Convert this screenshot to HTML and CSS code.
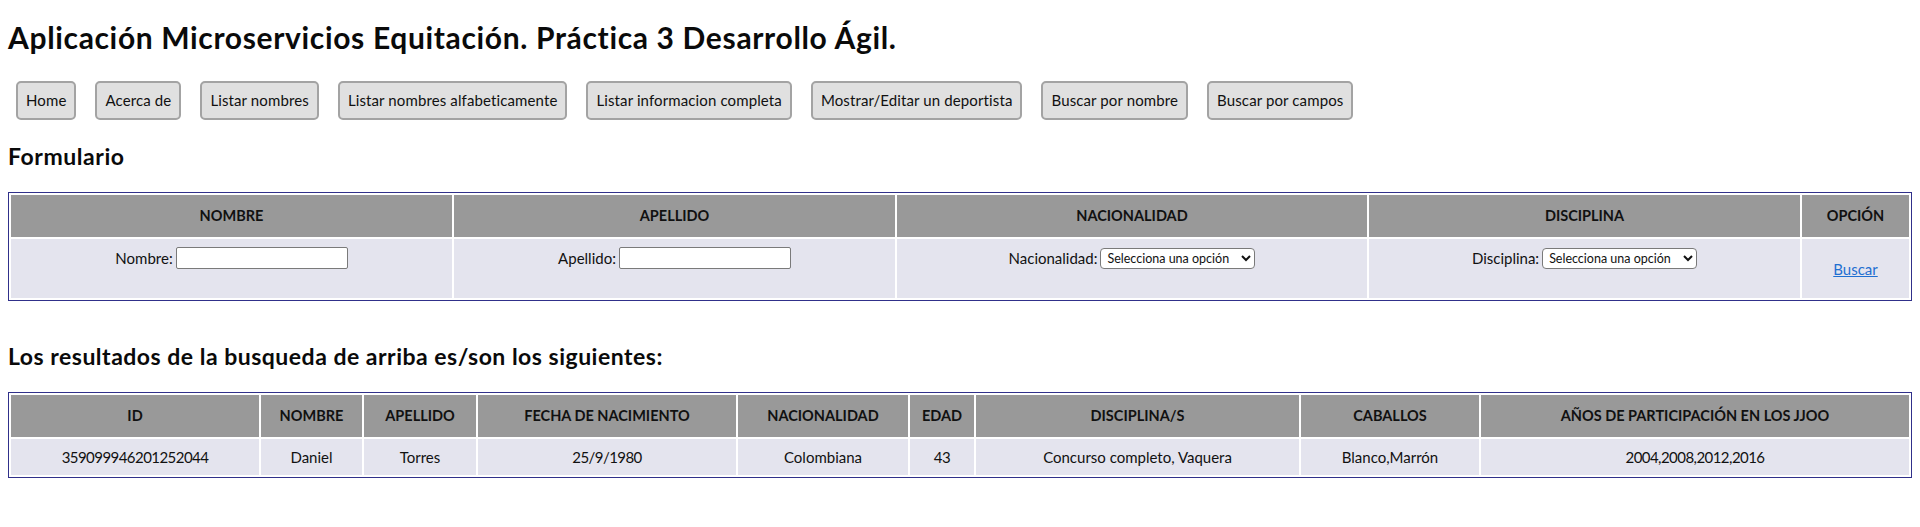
FILE: index.html
```html
<!DOCTYPE html>
<html lang="es">
<head>
<meta charset="utf-8">
<title>Aplicación Microservicios Equitación</title>
<link rel="stylesheet" href="styles.css">
</head>
<body>
<h1 class="title">Aplicación Microservicios Equitación. Práctica 3 Desarrollo Ágil.</h1>
<nav class="menu">
  <button class="btn" type="button">Home</button>
  <button class="btn" type="button">Acerca de</button>
  <button class="btn" type="button">Listar nombres</button>
  <button class="btn" type="button">Listar nombres alfabeticamente</button>
  <button class="btn" type="button">Listar informacion completa</button>
  <button class="btn" type="button">Mostrar/Editar un deportista</button>
  <button class="btn" type="button">Buscar por nombre</button>
  <button class="btn" type="button">Buscar por campos</button>
</nav>
<h2 class="section">Formulario</h2>
<table class="grid form-grid">
  <thead>
    <tr>
      <th class="fc-nombre">NOMBRE</th>
      <th class="fc-apellido">APELLIDO</th>
      <th class="fc-nac">NACIONALIDAD</th>
      <th class="fc-disc">DISCIPLINA</th>
      <th class="fc-opt">OPCIÓN</th>
    </tr>
  </thead>
  <tbody>
    <tr>
      <td><div class="field"><label for="nombre">Nombre:</label><input class="text-input" id="nombre" type="text"></div></td>
      <td><div class="field"><label for="apellido">Apellido:</label><input class="text-input" id="apellido" type="text"></div></td>
      <td><div class="field"><label for="nac">Nacionalidad:</label><select class="picker" id="nac"><option>Selecciona una opción</option></select></div></td>
      <td><div class="field"><label for="disc">Disciplina:</label><select class="picker" id="disc"><option>Selecciona una opción</option></select></div></td>
      <td><a class="link" href="#">Buscar</a></td>
    </tr>
  </tbody>
</table>
<h2 class="section results-title">Los resultados de la busqueda de arriba es/son los siguientes:</h2>
<table class="grid results">
  <thead>
    <tr>
      <th class="rc-id">ID</th>
      <th class="rc-nombre">NOMBRE</th>
      <th class="rc-apellido">APELLIDO</th>
      <th class="rc-fecha">FECHA DE NACIMIENTO</th>
      <th class="rc-nac">NACIONALIDAD</th>
      <th class="rc-edad">EDAD</th>
      <th class="rc-disc">DISCIPLINA/S</th>
      <th class="rc-cab">CABALLOS</th>
      <th class="rc-anos">AÑOS DE PARTICIPACIÓN EN LOS JJOO</th>
    </tr>
  </thead>
  <tbody>
    <tr>
      <td class="num">359099946201252044</td>
      <td>Daniel</td>
      <td>Torres</td>
      <td class="num">25/9/1980</td>
      <td>Colombiana</td>
      <td class="num">43</td>
      <td>Concurso completo, Vaquera</td>
      <td>Blanco,Marrón</td>
      <td class="num">2004,2008,2012,2016</td>
    </tr>
  </tbody>
</table>
</body>
</html>
```

FILE: styles.css
```css
html, body {
  background: #ffffff;
}
body {
  margin: 0;
  padding: 0 8px;
  font-family: Lato, "Liberation Sans", sans-serif;
  color: #111111;
}
.title {
  margin: 20px 0 0 0;
  font-size: 30px;
  line-height: 34px;
  letter-spacing: 0.65px;
  font-weight: 700;
  color: #0a0a0a;
}
.menu {
  display: flex;
  gap: 19px;
  margin-top: 27px;
  padding-left: 8px;
}
.btn {
  font-family: Lato, "Liberation Sans", sans-serif;
  font-size: 15px;
  line-height: 21px;
  letter-spacing: 0.12px;
  color: #111111;
  background: #e0e0e0;
  border: 2px solid #a3a3a3;
  border-radius: 5px;
  padding: 7px 8px;
  margin: 0;
  cursor: pointer;
}
.section {
  margin: 22px 0 0 0;
  font-size: 23px;
  line-height: 28px;
  letter-spacing: 0.55px;
  font-weight: 700;
  color: #0a0a0a;
}
.results-title {
  margin-top: 41px;
  letter-spacing: 0.5px;
}
.grid {
  width: 100%;
  margin-top: 22px;
  border: 1px solid #30308a;
  border-spacing: 2px;
  table-layout: fixed;
}
.grid th {
  box-sizing: border-box;
  background: #999999;
  color: #111111;
  font-size: 14.5px;
  line-height: 20px;
  font-weight: 700;
  padding: 11px 6px;
  text-align: center;
  vertical-align: middle;
}
.grid td {
  box-sizing: border-box;
  background: #e4e4ee;
  font-size: 15px;
  line-height: 20px;
  padding: 8px 6px;
  text-align: center;
  vertical-align: middle;
}
.grid td.num {
  letter-spacing: -0.55px;
}
.field {
  display: flex;
  justify-content: center;
  align-items: center;
  gap: 3px;
  height: 22px;
  padding-bottom: 21px;
}
.text-input {
  box-sizing: border-box;
  width: 172px;
  height: 22px;
  margin: 0;
  padding: 1px 3px;
  border: 1px solid #7a7a7a;
  border-radius: 2px;
  background: #ffffff;
  font-size: 13px;
}
.picker {
  box-sizing: border-box;
  width: 155px;
  height: 21px;
  margin: 0;
  padding: 0 2px;
  border: 1px solid #7a7a7a;
  border-radius: 4px;
  background: #ffffff;
  font-family: Lato, "Liberation Sans", sans-serif;
  font-size: 12.5px;
  color: #111111;
}
.link {
  color: #1f6fd1;
  text-decoration: underline;
}
.fc-nombre { width: 441px; }
.fc-apellido { width: 441px; }
.fc-nac { width: 470px; }
.fc-disc { width: 431px; }

.rc-id { width: 248px; }
.rc-nombre { width: 101px; }
.rc-apellido { width: 112px; }
.rc-fecha { width: 258px; }
.rc-nac { width: 170px; }
.rc-edad { width: 64px; }
.rc-disc { width: 323px; }
.rc-cab { width: 178px; }
```
